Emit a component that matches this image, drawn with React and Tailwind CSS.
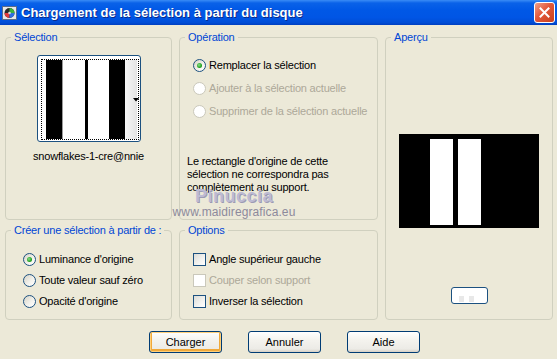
import React from "react";

const font = { fontFamily: '"Liberation Sans", Arial, sans-serif' };

function Radio({ checked, disabled }) {
  return (
    <div
      className={
        "w-[13px] h-[13px] shrink-0 rounded-full border flex items-center justify-center " +
        (disabled
          ? "border-[#CAC8BB] bg-white"
          : "border-[#1C5180] bg-[linear-gradient(135deg,#D6D3C6_0%,#F4F3EE_60%,#FFFFFF_100%)]")
      }
    >
      {checked && (
        <div className="w-[5px] h-[5px] rounded-full bg-[radial-gradient(circle_at_40%_40%,#8BE08B_0%,#21A121_60%,#1A8A1A_100%)]" />
      )}
    </div>
  );
}

function Check({ disabled }) {
  return (
    <div
      className={
        "w-[13px] h-[13px] shrink-0 border " +
        (disabled
          ? "border-[#CAC8BB] bg-white"
          : "border-[#1C5180] bg-[linear-gradient(135deg,#DCDCD7_0%,#F3F3F0_60%,#FFFFFF_100%)]")
      }
    />
  );
}

function Group({ label, className, children }) {
  return (
    <fieldset
      className={
        "border border-[#D0D0BF] rounded-[4px] min-w-0 " + (className || "")
      }
    >
      <legend className="ml-[5px] px-[3px] text-[11px] leading-[13px] tracking-[-0.2px] text-[#0046D5]">
        {label}
      </legend>
      {children}
    </fieldset>
  );
}

function Btn({ children, focus }) {
  return (
    <div
      className={
        "w-[73px] h-[22px] rounded-[3px] border border-[#003C74] flex items-center justify-center text-[11px] text-black bg-[linear-gradient(180deg,#FFFFFF_0%,#F4F3EE_40%,#ECEBE6_85%,#D6D0C5_100%)] " +
        (focus
          ? "shadow-[inset_0_0_0_1px_#FFD07A,inset_0_-1px_0_2px_#F0A93A]"
          : "")
      }
    >
      {children}
    </div>
  );
}

export default function App() {
  return (
    <div
      className="relative w-[557px] h-[359px] bg-[#ECE9D8] overflow-hidden text-black"
      style={font}
    >
      {/* Title bar */}
      <div className="h-[25px] flex items-center bg-[linear-gradient(180deg,#3A8CF6_0%,#0A62E8_12%,#0058E6_40%,#0055E5_70%,#004DD6_90%,#003FC0_100%)]">
        <svg width="16" height="16" viewBox="0 0 16 16" className="ml-[2px] shrink-0">
          <rect x="0.5" y="1.5" width="14" height="13" fill="#E8E8E8" stroke="#5A6C8A" />
          <circle cx="7.5" cy="8" r="5" fill="#2A2A2A" />
          <path d="M7.5 3 A5 5 0 0 1 12.5 8 L7.5 8 Z" fill="#3BB33B" />
          <path d="M7.5 8 L2.5 8 A5 5 0 0 0 7.5 13 Z" fill="#E03A3A" />
          <path d="M7.5 8 L12.5 8 A5 5 0 0 1 7.5 13 Z" fill="#2F6FE0" />
          <circle cx="7.5" cy="8" r="1.3" fill="#DDD" />
        </svg>
        <div className="ml-[3px] text-[13px] font-bold text-white [text-shadow:1px_1px_0_#0A2A8A]">
          Chargement de la sélection à partir du disque
        </div>
        <div className="ml-auto mr-[2px] w-[21px] h-[21px] rounded-[3px] border border-white bg-[linear-gradient(135deg,#F0A08A_0%,#E2583A_45%,#C8401E_100%)] flex items-center justify-center">
          <svg width="11" height="11" viewBox="0 0 11 11">
            <path d="M1.5 1.5 L9.5 9.5 M9.5 1.5 L1.5 9.5" stroke="white" strokeWidth="2" strokeLinecap="square" />
          </svg>
        </div>
      </div>

      {/* Body */}
      <div className="flex pt-[6px] pl-[5px] gap-[7px] text-[11px] tracking-[-0.2px]">
        {/* Left column */}
        <div className="w-[167px] flex flex-col gap-[4px]">
          <Group label="Sélection" className="h-[189px]">
            <div className="flex flex-col items-center">
              <div className="mt-[11px] w-[104px] h-[87px] border border-[#1C5180] rounded-[3px] bg-white relative">
                <div className="absolute left-[3px] top-[3px] right-[1px] bottom-[1px] border border-dotted border-black" />
                <div className="flex h-[79px] mt-[4px] ml-[8px]">
                  <div className="w-[16px] bg-black" />
                  <div className="w-[23px] bg-white border-l border-[#9A9A9A]" />
                  <div className="w-[3px] bg-black" />
                  <div className="w-[21px] bg-white" />
                  <div className="w-[16px] bg-black" />
                  <div className="w-[12px] bg-[linear-gradient(90deg,#F8F8F8,#E4E4E4)]" />
                </div>
                <svg width="6" height="4" viewBox="0 0 6 4" className="absolute left-[95px] top-[42px]">
                  <path d="M0 0 H6 L3 3.5 Z" fill="black" />
                </svg>
              </div>
              <div className="mt-[8px] leading-[13px]">snowflakes-1-cre@nnie</div>
            </div>
          </Group>
          <Group label="Créer une sélection à partir de :" className="h-[96px]">
            <div className="pt-[12px] pl-[17px]">
              <div className="h-[21px] flex items-center gap-[3px]">
                <Radio checked />
                <span>Luminance d'origine</span>
              </div>
              <div className="h-[21px] flex items-center gap-[3px]">
                <Radio />
                <span>Toute valeur sauf zéro</span>
              </div>
              <div className="h-[21px] flex items-center gap-[3px]">
                <Radio />
                <span>Opacité d'origine</span>
              </div>
            </div>
          </Group>
        </div>

        {/* Middle column */}
        <div className="w-[199px] flex flex-col gap-[4px]">
          <Group label="Opération" className="h-[189px]">
            <div className="pt-[10px] pl-[13px]">
              <div className="h-[23px] flex items-center gap-[3px]">
                <Radio checked />
                <span>Remplacer la sélection</span>
              </div>
              <div className="h-[23px] flex items-center gap-[3px] text-[#ACA899]">
                <Radio disabled />
                <span>Ajouter à la sélection actuelle</span>
              </div>
              <div className="h-[23px] flex items-center gap-[3px] text-[#ACA899]">
                <Radio disabled />
                <span>Supprimer de la sélection actuelle</span>
              </div>
            </div>
            <p className="mt-[32px] pl-[7px] leading-[13px]">
              Le rectangle d'origine de cette
              <br />
              sélection ne correspondra pas
              <br />
              complètement au support.
            </p>
          </Group>
          <Group label="Options" className="h-[96px]">
            <div className="pt-[12px] pl-[13px]">
              <div className="h-[21px] flex items-center gap-[3px]">
                <Check />
                <span>Angle supérieur gauche</span>
              </div>
              <div className="h-[21px] flex items-center gap-[3px] text-[#ACA899]">
                <Check disabled />
                <span>Couper selon support</span>
              </div>
              <div className="h-[21px] flex items-center gap-[3px]">
                <Check />
                <span>Inverser la sélection</span>
              </div>
            </div>
          </Group>
        </div>

        {/* Right column */}
        <Group label="Aperçu" className="w-[168px] h-[289px]">
          <div className="flex flex-col items-center">
            <div className="mt-[90px] w-[140px] h-[94px] bg-black flex pl-[31px] pt-[5px] pb-[3px] gap-[5px]">
              <div className="w-[23px] bg-white" />
              <div className="w-[23px] bg-white" />
            </div>
            <div className="mt-[59px] w-[37px] h-[17px] rounded-[3px] border border-[#1C5180] bg-white flex items-end justify-center pb-[1px]">
              <div className="grid grid-cols-4 w-[20px] h-[6px]">
                <div className="bg-[#E8E8E8]" />
                <div className="bg-white" />
                <div className="bg-[#E8E8E8]" />
                <div className="bg-white" />
              </div>
            </div>
          </div>
        </Group>
      </div>

      {/* Buttons */}
      <div className="flex mt-[11px] ml-[149px] gap-[26px]">
        <Btn focus>Charger</Btn>
        <Btn>Annuler</Btn>
        <Btn>Aide</Btn>
      </div>

      {/* Watermark */}
      <div className="absolute left-[173px] top-[187px] w-[122px] flex flex-col items-center pointer-events-none">
        <div className="text-[18px] leading-[19px] font-bold text-[#BDBBD3] [text-shadow:1px_1px_0_#9C9AB4] tracking-[0.5px]">
          Pinuccia
        </div>
        <div className="text-[12px] leading-[13px] text-[#8C8A9C] tracking-[0.1px]">
          www.maidiregrafica.eu
        </div>
      </div>
    </div>
  );
}
